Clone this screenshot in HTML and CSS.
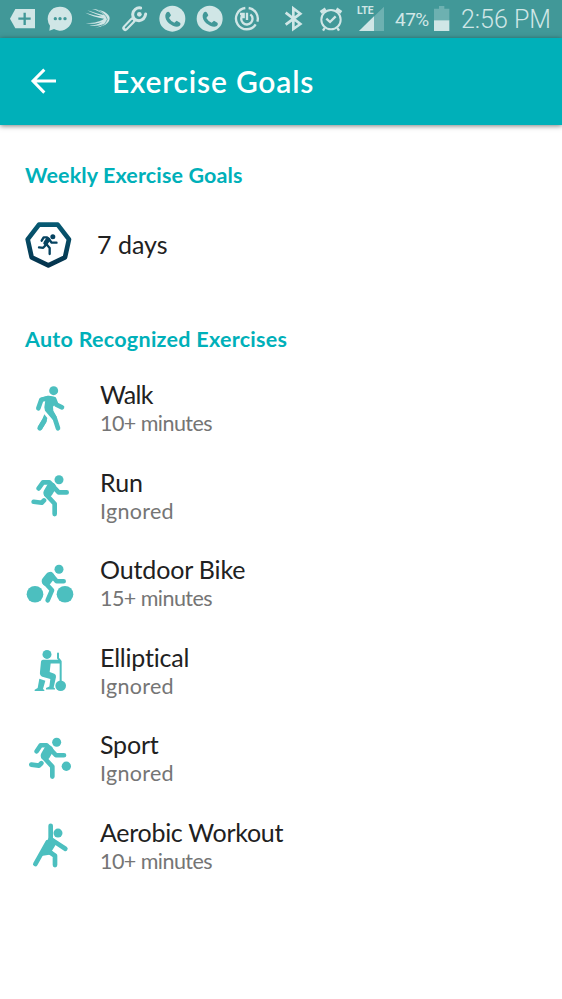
FILE: index.html
```html
<!DOCTYPE html>
<html lang="en">
<head>
<meta charset="utf-8">
<title>Exercise Goals</title>
<link rel="stylesheet" href="styles.css">
</head>
<body>
<div class="status">
  <svg width="42" height="38" viewBox="0 0 126 114"><path class="f" d="M30 56 46 27H105V85H46Z"/><path class="cut" stroke-width="7" d="M74 38V75M55 56H92"/></svg>
  <svg width="36" height="38" viewBox="126 0 108 114"><path class="f" d="M180 20a36 36 0 1 1-18 67l-14 5 2-15A36 36 0 0 1 180 20Z"/><g class="hole"><circle cx="166" cy="56" r="5"/><circle cx="180" cy="56" r="5"/><circle cx="195" cy="56" r="5"/></g></svg>
  <svg width="38" height="38" viewBox="234 0 114 114"><path class="f" d="M276 27C305 28 328 40 329 54C329 70 310 82 284 83C298 80 308 76 313 71C300 77 282 79 268 77C285 76 298 72 306 66C291 72 271 73 257 69C281 70 302 64 312 56C292 53 272 47 256 38C274 44 292 48 306 49C292 44 275 38 262 31C282 38 299 43 312 45C304 37 290 31 276 27Z"/><path class="cut" stroke-width="2" d="M292 29Q316 40 322 58Q318 72 304 80"/></svg>
  <svg width="37" height="38" viewBox="18 0 111 114"><path class="s" stroke-width="18" stroke-linecap="round" d="m46 84 22-23"/><path class="cut" stroke-width="5" stroke-linecap="round" d="m47 83 20-21"/><path class="s" stroke-width="9" stroke-linecap="round" d="M92 24A20 20 0 0 0 68 43Q68 61 87 62Q104 60 107 42"/><circle class="f" cx="88" cy="43" r="7"/></svg>
  <svg width="38" height="38" viewBox="39 0 114 114"><circle class="f" cx="97" cy="56" r="39"/><path class="hole" d="M79 38q6-6 10 0l4 8-6 8q6 11 16 14l7-6 10 6q4 5-3 11c-14 6-44-13-41-34Z"/></svg>
  <svg width="37" height="38" viewBox="153 0 111 114"><circle class="f" cx="209" cy="56" r="39"/><path class="hole" transform="translate(112 0)" d="M79 38q6-6 10 0l4 8-6 8q6 11 16 14l7-6 10 6q4 5-3 11c-14 6-44-13-41-34Z"/></svg>
  <svg width="42" height="38" viewBox="264 0 126 114"><path class="s" stroke-width="7" d="M316 24A32 32 0 1 0 347 73M326 24A32 32 0 0 1 352 65M331 43A17 17 0 1 1 309 44M321 38V60M300 42h11v13"/></svg>
  <svg width="40" height="38" viewBox="-15 0 120 114"><path class="s" stroke-width="8" d="M32 38 76 72 55 87V25L76 41 32 74"/></svg>
  <svg width="40" height="38" viewBox="105 0 120 114"><circle class="s" stroke-width="6" cx="168" cy="59" r="29"/><path class="s" stroke-width="7" d="m154 56 11 10 17-17M149 84l-5 8M187 84l5 8"/><path class="s" stroke-width="10" d="m137 37 15-10M184 27l15 10"/></svg>
  <svg width="42" height="38" viewBox="225 0 126 114"><path class="dim" d="M327 20V93H252Z"/><path class="f" d="M297 49V93H252Z"/><path class="clear" d="M240 14h58v30h-58Z"/><text class="lte" x="246" y="42">LTE</text></svg>
  <span class="pct">47%</span>
  <svg class="bat" width="18" height="38" viewBox="131 0 54 114"><path class="dim" d="M134 26h15v-8h16v8h15v36h-46Z"/><path class="f" d="M134 61h46v32h-46Z"/></svg>
  <span class="clock">2:56 PM</span>
</div>
<header class="bar">
  <svg class="back" width="30" height="30" viewBox="87 63 90 90"><path d="M168 108H99M133 74 99 108l34 35"/></svg>
  <h1>Exercise Goals</h1>
</header>
<main>
  <h2 class="weekly">Weekly Exercise Goals</h2>
  <div class="goal">
    <svg width="54" height="54" viewBox="21 189 162 162">
      <defs><linearGradient id="navy" x1="0" y1="200" x2="0" y2="340" gradientUnits="userSpaceOnUse"><stop stop-color="#075c75"/><stop offset="1" stop-color="#04304a"/></linearGradient></defs>
      <path class="ring" d="M72 209H128L162 253 150 307 100 331 50 307 38 253Z"/>
      <g class="mini" transform="translate(45 221) scale(.5)"><circle cx="137" cy="49" r="15"/><path d="M70 72 82 52H102L112 61 130 84H159M94 88l24 28v36M54 112l25 3 12-13"/><path class="torso" d="m108 66-14 20"/></g>
    </svg>
    <span class="t days">7 days</span>
  </div>
  <h2 class="auto">Auto Recognized Exercises</h2>
  <div class="list">
    <div class="row">
      <svg viewBox="0 -2 210 210"><circle cx="116" cy="48" r="13.5"/><path d="m70 101 9-26 22-5 16 3 7 17 17 8M102 105l17 25 10 31M74 161l14-23"/><path class="b" d="m78 69 20-6 23 5 5 14-12 14 1 12 10 18-12 9-23-27-2-10 3-22ZM88 119l9 11-3 13-14 23-12-9 14-24Z"/></svg>
      <div><div class="t walk">Walk</div><div class="u min">10+ minutes</div></div>
    </div>
    <div class="row">
      <svg viewBox="0 -10.25 210 210"><circle cx="132" cy="46" r="13.5"/><path d="M71 72 84 54H103L131 84H155M94 91l25 27v31M56 112l24 3 7-7"/><path class="torso" d="M109 68 99 85"/></svg>
      <div><div class="t">Run</div><div class="u ign">Ignored</div></div>
    </div>
    <div class="row">
      <svg viewBox="0 252.25 210 210"><circle cx="132" cy="313" r="13.5"/><circle cx="60" cy="388" r="25"/><circle cx="150" cy="388" r="25"/><path d="m107 328 18 21h21M89 352l22 24-13 30"/><path class="torso" d="M105 335 94 349"/></svg>
      <div><div class="t bike">Outdoor Bike</div><div class="u min">15+ minutes</div></div>
    </div>
    <div class="row">
      <svg viewBox="0 -10.25 210 210"><circle cx="96" cy="45" r="13.5"/><circle cx="137" cy="139" r="16"/><path class="n" d="M129 42v14l8 10v60"/><path class="b" d="M84 61h52v11h-29l-3 26 14 5q6 3 5 10l-7 31 4 3v3H93v-4l10-5 3-22-24-7q-9-4-7-15l3-31q1-5 6-5ZM73 118l18 6-7 25 4 3v3H59v-4l9-5Z"/></svg>
      <div><div class="t ell">Elliptical</div><div class="u ign">Ignored</div></div>
    </div>
    <div class="row">
      <svg viewBox="0 252.25 210 210"><circle cx="125" cy="307" r="13.5"/><circle cx="154" cy="379" r="14"/><path d="M65 334 77 316H95L123 346H147M86 352l26 28v30M49 374l23 3 7-7"/><path class="torso" d="M101 330 91 347"/></svg>
      <div><div class="t ell">Sport</div><div class="u ign">Ignored</div></div>
    </div>
    <div class="row">
      <svg viewBox="0 4.75 210 210"><circle cx="129" cy="71" r="13.5"/><path d="M107 49V89l44 29M98 98 61 164M98 124l22 15v28"/><path class="b" d="m101 85 18 4 5 14-13 21 5 7-13 5-24 4Z"/></svg>
      <div><div class="t aero">Aerobic Workout</div><div class="u min">10+ minutes</div></div>
    </div>
  </div>
</main>
</body>
</html>
```
FILE: styles.css
```css
* { box-sizing: border-box; }
body { margin: 0; height: 999px; background: #fff; font-family: Lato, "Open Sans", sans-serif; font-variant-ligatures: none; overflow: hidden; }
.status { display: flex; height: 38px; background: #419898; color: #d0e6e6; font-family: Roboto, sans-serif; white-space: nowrap; }
.status svg { flex: none; display: block; }
.f { fill: #d0e6e6; }
.dim { fill: #6db1b1; }
.s { fill: none; stroke: #d0e6e6; }
.cut { fill: none; stroke: #419898; }
.hole, .clear { fill: #419898; }
.lte { fill: #d0e6e6; font: 700 31px Roboto, sans-serif; }
.pct { width: 39px; padding-left: 3px; font-size: 19px; line-height: 40px; letter-spacing: -.5px; }
.bat { margin-left: 2px; }
.clock { margin-left: 10px; font-size: 25px; font-weight: 350; line-height: 39px; }
.bar { position: relative; display: flex; align-items: center; height: 87px; padding-left: 29px; background: #00b0b9; color: #fff; box-shadow: 0 1px 5px rgba(0,0,0,.5); }
.back { margin-top: -1px; }
.back path { fill: none; stroke: #fff; stroke-width: 9; }
h1 { margin: -2px 0 0 53px; font-size: 30px; font-weight: 600; line-height: 40px; letter-spacing: .8px; white-space: nowrap; }
h2 { margin: 0; font-size: 21.5px; line-height: 30px; font-weight: 700; color: #00b0b9; white-space: nowrap; }
.weekly { letter-spacing: .13px; }
.auto { letter-spacing: .28px; }
main { padding: 35px 0 0 25px; }
.goal { display: flex; align-items: center; height: 54px; margin: 28px 0 52px -3px; }
.goal .days { margin: -2px 0 0 21px; }
.ring { fill: none; stroke: url(#navy); stroke-width: 14; stroke-linejoin: round; }
.mini circle { fill: #064360; }
.mini path { fill: none; stroke: #064360; stroke-width: 14; stroke-linecap: round; stroke-linejoin: round; }
.mini .torso { stroke-width: 28; }
.list { margin: 11px 0 0 -10px; }
.row { display: flex; align-items: center; height: 87.5px; gap: 15px; }
.row > div { margin-top: -1px; }
.row svg { width: 70px; height: 70px; flex: none; fill: #4cbfbf; }
.row svg path { fill: none; stroke: #4cbfbf; stroke-width: 14; stroke-linecap: round; stroke-linejoin: round; }
.row svg .torso { stroke-width: 28; }
.row svg .n { stroke-width: 6; }
.row svg .b { fill: #4cbfbf; stroke: none; }
.t { font-size: 25px; line-height: 30px; color: #212121; white-space: nowrap; }
.u { font-size: 21.5px; line-height: 28px; color: #757575; white-space: nowrap; }
.walk { letter-spacing: -.7px; }
.bike { letter-spacing: -.15px; }
.ell { letter-spacing: -.2px; }
.aero { letter-spacing: -.28px; }
.min { letter-spacing: -.55px; }
.ign { letter-spacing: .3px; }
```
